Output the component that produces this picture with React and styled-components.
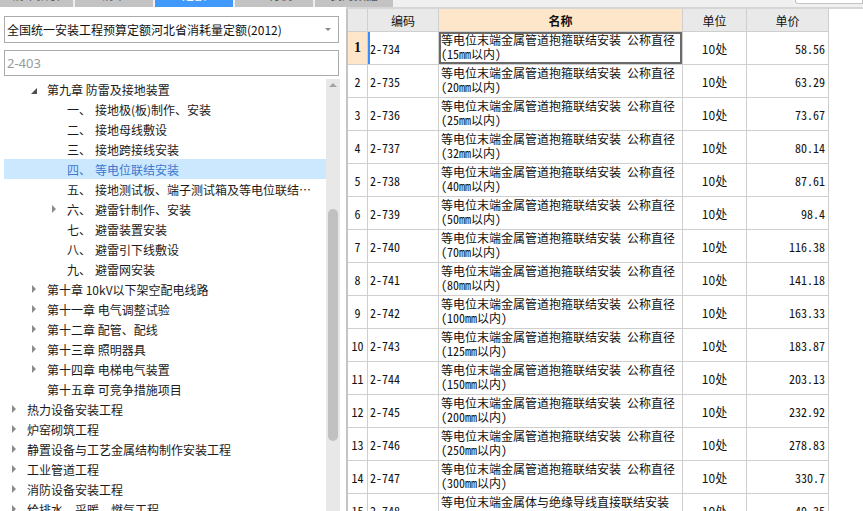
import React from "react";
import styled, { createGlobalStyle, css } from "styled-components";

const Global = createGlobalStyle`
  html, body { margin: 0; padding: 0; background: #fff; overflow: hidden; }
  body { font-family: "Noto Sans CJK SC", "Noto Sans", sans-serif; font-size: 12px; color: #1b1b1b; }
  * { box-sizing: border-box; }
`;

const Page = styled.div`
  width: 863px;
  height: 511px;
  display: flex;
  flex-direction: column;
  overflow: hidden;
`;

const TopBar = styled.div`
  height: 7px;
  flex: none;
  display: flex;
  gap: 2px;
  background: #f0f0f0;
  overflow: hidden;
`;

const Tab = styled.div`
  width: ${(p) => p.$w}px;
  flex: none;
  height: 7px;
  overflow: hidden;
  background: ${(p) => (p.$active ? "#4199fb" : "#c3c3c3")};
  color: ${(p) => (p.$active ? "#fff" : "#555")};
  font-size: 12px;
  line-height: 12px;
  text-align: center;
`;

const TabText = styled.div`
  margin-top: -11px;
`;

const CornerBox = styled.div`
  margin-left: auto;
  width: 68px;
  height: 4px;
  background: #fff;
  border: 1px solid #c4c4c4;
  border-top: none;
  border-bottom-left-radius: 3px;
`;

const Main = styled.div`
  flex: 1;
  display: flex;
  min-height: 0;
`;

const Left = styled.div`
  width: 346px;
  flex: none;
  display: flex;
  flex-direction: column;
  padding: 9px 6px 0 4px;
  background: #fff;
`;

const Select = styled.div`
  height: 27px;
  width: 335px;
  flex: none;
  border: 1px solid #ababab;
  display: flex;
  align-items: center;
  padding: 0 0 0 2px;
  font-size: 12px;
  color: #111;
`;

const SelectText = styled.span`
  flex: 1;
`;

const Caret = styled.span`
  width: 0;
  height: 0;
  border-left: 3px solid transparent;
  border-right: 3px solid transparent;
  border-top: 3px solid #8a8a8a;
  margin-right: 7px;
`;

const Search = styled.div`
  margin-top: 7px;
  height: 26px;
  width: 335px;
  flex: none;
  border: 1px solid #ababab;
  display: flex;
  align-items: center;
  padding-left: 2px;
  font-family: "Noto Sans", sans-serif;
  font-size: 13px;
  color: #9a9a9a;
`;

const TreeArea = styled.div`
  margin-top: 3px;
  flex: 1;
  display: flex;
  min-height: 0;
`;

const TreeList = styled.div`
  width: 322px;
  flex: none;
  display: flex;
  flex-direction: column;
`;

const TreeRow = styled.div`
  height: 20px;
  flex: none;
  display: flex;
  align-items: center;
  padding-left: ${(p) => 4 + (p.$level - 1) * 20}px;
  white-space: nowrap;
  overflow: hidden;
  ${(p) =>
    p.$selected &&
    css`
      background: #cce8ff;
      color: #3b78cf;
    `}
`;

const ArrowBox = styled.span`
  width: 19px;
  flex: none;
  display: flex;
  align-items: center;
`;

const Collapsed = styled.span`
  margin-left: 4px;
  width: 0;
  height: 0;
  border-top: 4px solid transparent;
  border-bottom: 4px solid transparent;
  border-left: 4px solid #8c8c8c;
`;

const Expanded = styled.span`
  margin-left: 3px;
  margin-top: 3px;
  width: 0;
  height: 0;
  border-bottom: 6px solid #4d4d4d;
  border-left: 6px solid transparent;
`;

const Num = styled.span`
  width: 28px;
  flex: none;
`;

const Label = styled.span`
  overflow: hidden;
  text-overflow: ellipsis;
  padding-right: 6px;
`;

const Scrollbar = styled.div`
  width: 14px;
  flex: none;
  background: #e8e8e8;
  display: flex;
  flex-direction: column;
  align-items: center;
`;

const UpArrow = styled.span`
  margin-top: 4px;
  width: 0;
  height: 0;
  border-left: 4px solid transparent;
  border-right: 4px solid transparent;
  border-bottom: 4px solid #a5a5a5;
`;

const Thumb = styled.div`
  margin-top: 122px;
  width: 10px;
  height: 232px;
  border-radius: 5px;
  background: #c1c1c1;
`;

const Right = styled.div`
  flex: 1;
  display: flex;
  flex-direction: column;
  border-top: 2px solid #d6d6d6;
  background: #fff;
`;

const Grid = styled.div`
  display: grid;
  grid-template-columns: 20px 71px 244px 64px 82px;
  grid-auto-rows: 33px;
  grid-template-rows: 23px;
  width: 483px;
  border-left: 2px solid #c4c4c4;
  font-family: "Noto Sans Mono CJK SC", "Noto Sans CJK SC", monospace;
  font-size: 12px;
  color: #111;
`;

const Cell = styled.div`
  border-right: 1px solid #cfcfcf;
  border-bottom: 1px solid #cfcfcf;
  display: flex;
  align-items: center;
  white-space: nowrap;
  overflow: hidden;
`;

const Head = styled(Cell)`
  background: ${(p) => (p.$accent ? "#fde6c9" : "#e9e9e9")};
  justify-content: center;
  font-weight: ${(p) => (p.$accent ? 700 : 400)};
  font-family: "Noto Sans CJK SC", sans-serif;
`;

const RowHead = styled(Cell)`
  justify-content: center;
  background: ${(p) => (p.$active ? "#fde6c9" : "#fff")};
  font-weight: ${(p) => (p.$active ? 700 : 400)};
  font-family: ${(p) => (p.$active ? '"Liberation Serif", serif' : "inherit")};
  font-size: ${(p) => (p.$active ? "14px" : "12px")};
`;

const CodeCell = styled(Cell)`
  padding-left: 2px;
  ${(p) => p.$active && css`box-shadow: inset 2px 0 0 #3d8cfc;`}
`;

const NameCell = styled(Cell)`
  flex-direction: column;
  align-items: flex-start;
  justify-content: flex-start;
  padding: 1px 0 0 2px;
  line-height: 14px;
  ${(p) => p.$active && css`box-shadow: inset 0 0 0 2px #6a6a6a;`}
`;

const UnitCell = styled(Cell)`
  justify-content: center;
  font-family: "Noto Sans CJK SC", sans-serif;
`;

const PriceCell = styled(Cell)`
  justify-content: flex-end;
  padding-right: 3px;
`;

const tabs = [
  { w: 73, t: "清单指引" },
  { w: 78, t: "清单" },
  { w: 78, t: "定额", active: true },
  { w: 78, t: "人材机" },
  { w: 78, t: "我的数据" },
];

const tree = [
  { level: 2, state: "open", label: "第九章 防雷及接地装置" },
  { level: 3, num: "一、", label: "接地极(板)制作、安装" },
  { level: 3, num: "二、", label: "接地母线敷设" },
  { level: 3, num: "三、", label: "接地跨接线安装" },
  { level: 3, num: "四、", label: "等电位联结安装", selected: true },
  { level: 3, num: "五、", label: "接地测试板、端子测试箱及等电位联结端子箱安装" },
  { level: 3, num: "六、", label: "避雷针制作、安装", state: "closed" },
  { level: 3, num: "七、", label: "避雷装置安装" },
  { level: 3, num: "八、", label: "避雷引下线敷设" },
  { level: 3, num: "九、", label: "避雷网安装" },
  { level: 2, state: "closed", label: "第十章 10kV以下架空配电线路" },
  { level: 2, state: "closed", label: "第十一章 电气调整试验" },
  { level: 2, state: "closed", label: "第十二章 配管、配线" },
  { level: 2, state: "closed", label: "第十三章 照明器具" },
  { level: 2, state: "closed", label: "第十四章 电梯电气装置" },
  { level: 2, label: "第十五章 可竞争措施项目" },
  { level: 1, state: "closed", label: "热力设备安装工程" },
  { level: 1, state: "closed", label: "炉窑砌筑工程" },
  { level: 1, state: "closed", label: "静置设备与工艺金属结构制作安装工程" },
  { level: 1, state: "closed", label: "工业管道工程" },
  { level: 1, state: "closed", label: "消防设备安装工程" },
  { level: 1, state: "closed", label: "给排水、采暖、燃气工程" },
];

const sizes = ["15", "20", "25", "32", "40", "50", "70", "80", "100", "125", "150", "200", "250", "300"];
const prices = ["58.56", "63.29", "73.67", "80.14", "87.61", "98.4", "116.38", "141.18", "163.33", "183.87", "203.13", "232.92", "278.83", "330.7"];

const rows = sizes.map((s, i) => ({
  code: `2-${734 + i}`,
  lines: ["等电位末端金属管道抱箍联结安装 公称直径", `(${s}mm以内)`],
  price: prices[i],
}));
rows.push({ code: "2-748", lines: ["等电位末端金属体与绝缘导线直接联结安装"], price: "49.35" });

export default function App() {
  return (
    <Page>
      <Global />
      <TopBar>
        {tabs.map((t) => (
          <Tab key={t.t} $w={t.w} $active={t.active}>
            <TabText>{t.t}</TabText>
          </Tab>
        ))}
        <CornerBox />
      </TopBar>
      <Main>
        <Left>
          <Select>
            <SelectText>全国统一安装工程预算定额河北省消耗量定额(2012)</SelectText>
            <Caret />
          </Select>
          <Search>2-403</Search>
          <TreeArea>
            <TreeList>
              {tree.map((n, i) => (
                <TreeRow key={i} $level={n.level} $selected={n.selected}>
                  <ArrowBox>
                    {n.state === "open" && <Expanded />}
                    {n.state === "closed" && <Collapsed />}
                  </ArrowBox>
                  {n.num && <Num>{n.num}</Num>}
                  <Label>{n.label}</Label>
                </TreeRow>
              ))}
            </TreeList>
            <Scrollbar>
              <UpArrow />
              <Thumb />
            </Scrollbar>
          </TreeArea>
        </Left>
        <Right>
          <Grid>
            <Head />
            <Head>编码</Head>
            <Head $accent>名称</Head>
            <Head>单位</Head>
            <Head>单价</Head>
            {rows.map((r, i) => (
              <React.Fragment key={r.code}>
                <RowHead $active={i === 0}>{i + 1}</RowHead>
                <CodeCell $active={i === 0}>{r.code}</CodeCell>
                <NameCell $active={i === 0}>
                  {r.lines.map((l) => (
                    <span key={l}>{l}</span>
                  ))}
                </NameCell>
                <UnitCell>10处</UnitCell>
                <PriceCell>{r.price}</PriceCell>
              </React.Fragment>
            ))}
          </Grid>
        </Right>
      </Main>
    </Page>
  );
}
